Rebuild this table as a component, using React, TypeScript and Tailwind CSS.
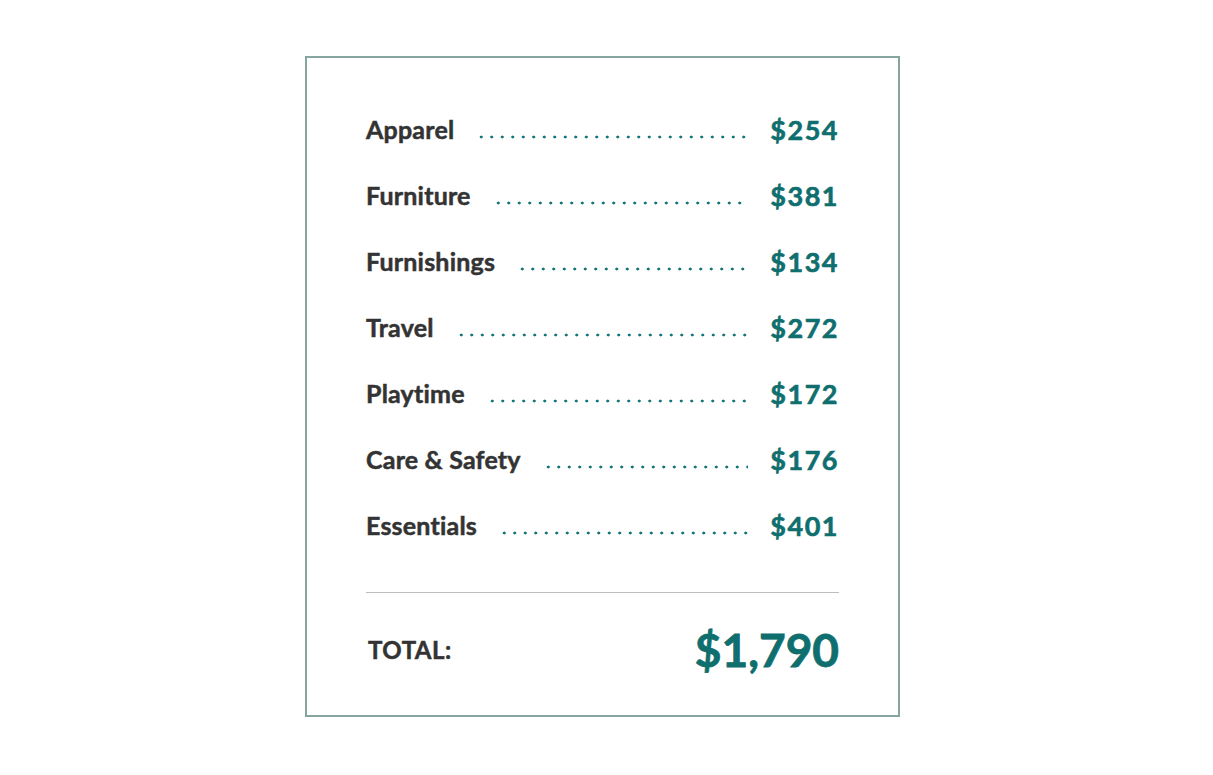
const items = [
  { name: 'Apparel', amount: '$254' },
  { name: 'Furniture', amount: '$381' },
  { name: 'Furnishings', amount: '$134' },
  { name: 'Travel', amount: '$272' },
  { name: 'Playtime', amount: '$172' },
  { name: 'Care & Safety', amount: '$176' },
  { name: 'Essentials', amount: '$401' },
];

export default function App() {
  return (
    <div className="min-h-screen bg-white font-['Lato',sans-serif] pt-[56px]">
      <div className="ml-[305px] w-[595px] h-[661px] border-2 border-[#86a59f] px-[59px] pt-[39px]">
        <div className="flex flex-col">
          {items.map((item) => (
            <div key={item.name} className="flex items-center h-[66px]">
              <span className="text-[25px] font-bold text-[#333333] tracking-[0.2px] [-webkit-text-stroke:0.5px]">{item.name}</span>
              <span className="flex-1 mx-[22px] h-[4px] mt-[14px] bg-[radial-gradient(circle,#137575_1.3px,transparent_1.7px)] bg-[length:10.5px_4px] bg-repeat-x" />
              <span className="text-[27px] font-bold text-[#0f6e6e] tracking-[1.5px] [-webkit-text-stroke:0.6px]">{item.amount}</span>
            </div>
          ))}
        </div>
        <div className="mt-[33px] border-t border-[#bdbdbd]" />
        <div className="flex items-center justify-between pt-[22px] pl-[2px]">
          <span className="text-[24px] font-bold text-[#333333] tracking-[0.5px] [-webkit-text-stroke:0.5px]">TOTAL:</span>
          <span className="text-[46px] font-bold text-[#0f6e6e] [-webkit-text-stroke:0.8px]">$1,790</span>
        </div>
      </div>
    </div>
  );
}
